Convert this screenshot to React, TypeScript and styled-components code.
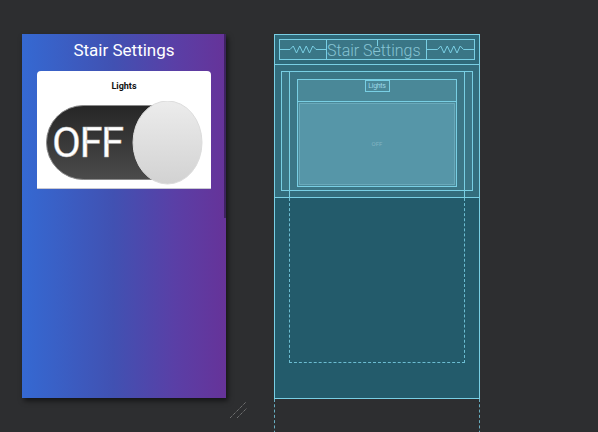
import styled, { createGlobalStyle } from 'styled-components'

const GlobalStyle = createGlobalStyle`
  html, body {
    margin: 0;
    padding: 0;
    background: #2d2e30;
    font-family: Roboto, 'Noto Sans', sans-serif;
  }
  #root {
    width: 598px;
    height: 432px;
    position: relative;
    overflow: hidden;
  }
`

const line = '#79cfe4'

const Canvas = styled.div`
  position: relative;
  width: 598px;
  height: 432px;
  background: #2d2e30;
`

/* ---------- design view ---------- */

const Phone = styled.div`
  position: absolute;
  left: 22px;
  top: 34px;
  width: 204px;
  height: 364px;
  display: flex;
  flex-direction: column;
  background: linear-gradient(to right, #3569d2 0%, #4151b2 45%, #5a3fa6 75%, #663399 100%);
  box-shadow: 2px 3px 5px rgba(0, 0, 0, 0.55);
`

const ScrollThumb = styled.div`
  position: absolute;
  right: 0;
  top: 0;
  width: 2px;
  height: 184px;
  background: rgba(30, 20, 50, 0.55);
`

const Title = styled.div`
  height: 30px;
  display: flex;
  align-items: center;
  justify-content: center;
  color: #ffffff;
  font-size: 17px;
  padding-top: 2px;
  box-sizing: border-box;
`

const Card = styled.div`
  width: 174px;
  height: 118px;
  margin: 7px auto 0;
  background: #ffffff;
  border-radius: 4px 4px 0 0;
  border-bottom: 1px solid #c9c9d2;
  box-sizing: border-box;
  display: flex;
  flex-direction: column;
`

const CardLabel = styled.div`
  height: 30px;
  display: flex;
  align-items: center;
  justify-content: center;
  font-size: 9px;
  font-weight: bold;
  color: #111;
  padding-bottom: 1px;
  box-sizing: border-box;
`

const ToggleArt = styled.svg`
  display: block;
  margin-left: 8px;
`

function Toggle() {
  return (
    <ToggleArt width='159' height='85' viewBox='0 0 159 85'>
      <defs>
        <linearGradient id='pill' x1='0' y1='0' x2='0' y2='1'>
          <stop offset='0' stopColor='#262626' />
          <stop offset='1' stopColor='#4b4b4b' />
        </linearGradient>
        <linearGradient id='knob' x1='0' y1='0' x2='0' y2='1'>
          <stop offset='0' stopColor='#ececec' />
          <stop offset='1' stopColor='#d2d2d2' />
        </linearGradient>
      </defs>
      <rect x='1.5' y='4.5' width='150' height='74' rx='37' fill='url(#pill)' stroke='#8a8a8a' strokeWidth='1' />
      <text
        x='7'
        y='56'
        fill='#ffffff'
        stroke='#bbbbbb'
        strokeWidth='0.4'
        fontFamily='Roboto, sans-serif'
        fontSize='42'
        letterSpacing='-1.5'
      >
        OFF
      </text>
      <ellipse cx='122.5' cy='41.5' rx='34.5' ry='41.5' fill='url(#knob)' stroke='#dcdcdc' strokeWidth='1' />
    </ToggleArt>
  )
}

/* ---------- blueprint view ---------- */

const Blueprint = styled.div`
  position: absolute;
  left: 274px;
  top: 34px;
  width: 206px;
  height: 365px;
  box-sizing: border-box;
  border: 1px solid ${line};
  background: #235b6b;
  display: flex;
  flex-direction: column;
`

const BpHeader = styled.div`
  height: 30px;
  box-sizing: border-box;
  padding: 4px 4px 0 4px;
  background: #2f6a7a;
  border-bottom: 1px solid ${line};
`

const BpHeaderRow = styled.div`
  height: 21px;
  box-sizing: border-box;
  border: 1px solid ${line};
  background: #3a7686;
  display: flex;
`

const SpringCell = styled.div<{ $w: number; $side: 'left' | 'right' }>`
  width: ${({ $w }) => $w}px;
  flex-shrink: 0;
  box-sizing: border-box;
  ${({ $side }) => ($side === 'left' ? `border-right: 1px solid ${line};` : `border-left: 1px solid ${line};`)}
  display: flex;
  align-items: center;
`

const TitleCell = styled.div`
  width: 99px;
  min-width: 0;
  flex-shrink: 0;
  position: relative;
  color: #86c4d4;
  font-size: 16px;
  font-weight: 300;
  line-height: 21px;
  white-space: nowrap;
  overflow: visible;
  &::before {
    content: '';
    position: absolute;
    left: 50px;
    top: 0;
    width: 1px;
    height: 6px;
    background: ${line};
  }
`

function Spring({ w }: { w: number }) {
  const mid = w / 2
  const pts: string[] = []
  const start = mid - 13
  for (let i = 0; i <= 8; i++) {
    const x = start + i * 3.25
    const y = i === 0 || i === 8 ? 9.5 : i % 2 ? 6 : 13
    pts.push(`${x},${y}`)
  }
  return (
    <svg width={w} height='19' viewBox={`0 0 ${w} 19`}>
      <polyline
        points={`0,9.5 ${pts.join(' ')} ${w},9.5`}
        fill='none'
        stroke={line}
        strokeWidth='1'
      />
    </svg>
  )
}

const BpBody = styled.div`
  height: 133px;
  box-sizing: border-box;
  background: #336d7d;
  border-bottom: 1px solid ${line};
  padding: 6px 6px 0 6px;
`

const BpScroll = styled.div`
  height: 120px;
  box-sizing: border-box;
  border: 1px solid ${line};
  background: #3b7686;
  padding: 0 7px;
`

const BpCardFrame = styled.div`
  height: calc(100% + 7px);
  box-sizing: border-box;
  border-left: 1px solid ${line};
  border-right: 1px solid ${line};
  padding: 7px 7px 0 7px;
`

const BpCard = styled.div`
  height: 108px;
  box-sizing: border-box;
  border: 1px solid ${line};
  background: #4a8898;
  display: flex;
  flex-direction: column;
`

const BpLabelRow = styled.div`
  height: 22px;
  box-sizing: border-box;
  border-bottom: 1px solid ${line};
  display: flex;
  justify-content: center;
`

const BpLabel = styled.div`
  width: 25px;
  height: 12px;
  box-sizing: border-box;
  border: 1px solid ${line};
  color: #9bd6e6;
  font-size: 7px;
  letter-spacing: -0.3px;
  display: flex;
  align-items: center;
  justify-content: center;
`

const BpImage = styled.div`
  flex: 1;
  margin: 1px;
  background: #5696a8;
  box-shadow: inset 0 0 0 1px #6aa9ba;
  display: flex;
  align-items: center;
  justify-content: center;
  color: #82b4c2;
  font-size: 6px;
  padding-bottom: 2px;
`

const BpLower = styled.div`
  flex: 1;
  padding-left: 14px;
`

const BpDashed = styled.div`
  width: 176px;
  height: 165px;
  box-sizing: border-box;
  border: 1px dashed ${line};
  border-top: none;
  opacity: 0.85;
`

const BpOverflow = styled.div`
  position: absolute;
  left: 274px;
  top: 399px;
  width: 206px;
  height: 40px;
  box-sizing: border-box;
  border-left: 1px dashed ${line};
  border-right: 1px dashed ${line};
  opacity: 0.8;
`

const ResizeGrip = styled.svg`
  position: absolute;
  left: 228px;
  top: 401px;
`

export default function App() {
  return (
    <>
      <GlobalStyle />
      <Canvas>
        <Phone>
          <ScrollThumb />
          <Title>Stair Settings</Title>
          <Card>
            <CardLabel>Lights</CardLabel>
            <Toggle />
          </Card>
        </Phone>

        <ResizeGrip width='20' height='20' viewBox='0 0 20 20'>
          <line x1='2' y1='17' x2='18' y2='1' stroke='#8d8d8d' strokeWidth='1' strokeDasharray='1 1' />
          <line x1='9' y1='17' x2='19' y2='7' stroke='#8d8d8d' strokeWidth='1' strokeDasharray='1 1' />
        </ResizeGrip>

        <Blueprint>
          <BpHeader>
            <BpHeaderRow>
              <SpringCell $w={47} $side='left'>
                <Spring w={46} />
              </SpringCell>
              <TitleCell>Stair Settings</TitleCell>
              <SpringCell $w={48} $side='right'>
                <Spring w={47} />
              </SpringCell>
            </BpHeaderRow>
          </BpHeader>
          <BpBody>
            <BpScroll>
              <BpCardFrame>
                <BpCard>
                  <BpLabelRow>
                    <BpLabel>Lights</BpLabel>
                  </BpLabelRow>
                  <BpImage>OFF</BpImage>
                </BpCard>
              </BpCardFrame>
            </BpScroll>
          </BpBody>
          <BpLower>
            <BpDashed />
          </BpLower>
        </Blueprint>
        <BpOverflow />
      </Canvas>
    </>
  )
}
